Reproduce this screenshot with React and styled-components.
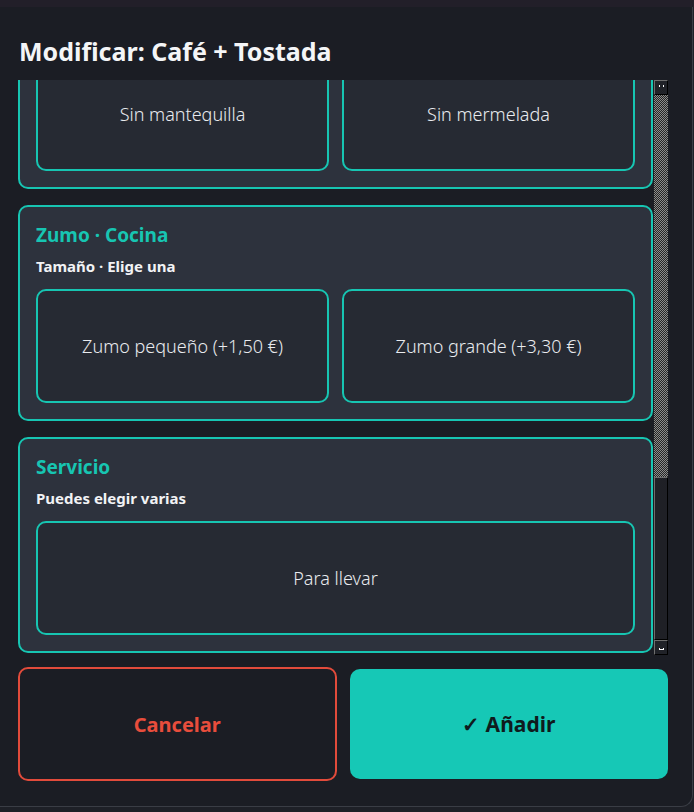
import React, { useLayoutEffect, useRef } from "react";
import styled, { createGlobalStyle } from "styled-components";

const TEAL = "#17c5b2";

const GlobalStyle = createGlobalStyle`
  * { box-sizing: border-box; }
  body {
    margin: 0;
    overflow: hidden;
    background: #1d1f26;
    font-family: "Noto Sans", "Open Sans", sans-serif;
  }
`;

const Overlay = styled.div`
  height: 100vh;
  padding-top: 7px;
  background: linear-gradient(#221f29 0 7px, #1e2027 7px);
  overflow: hidden;
`;

const Modal = styled.div`
  display: flex;
  flex-direction: column;
  height: 800px;
  width: 705px;
  margin-left: -12px;
  padding: 0 24px 0 29px;
  background: #1b1d24;
  border: 1px solid #3a3d45;
  border-top: 0;
  border-radius: 0 0 12px 12px;
`;

const Header = styled.div`
  padding: 28px 0 13px 1px;
`;

const Title = styled.h2`
  margin: 0;
  color: #f4f5f7;
  font-size: 25px;
  line-height: 32px;
  font-weight: 700;
`;

const Body = styled.div`
  flex: 1;
  min-height: 0;
  display: flex;
`;

const Scroll = styled.div`
  flex: 1;
  min-width: 0;
  overflow-y: auto;
  scrollbar-width: none;
  display: flex;
  flex-direction: column;
  gap: 16px;
  padding-bottom: 2px;
`;

/* classic scrollbar, drawn by hand: arrow, track, thumb (at the bottom), arrow */
const ScrollBar = styled.div`
  width: 14px;
  display: flex;
  flex-direction: column;
  background: #1b1d24;
`;

const ScrollArrow = styled.div`
  height: 15px;
  flex-shrink: 0;
  display: flex;
  align-items: ${(p) => (p.down ? "flex-end" : "flex-start")};
  justify-content: center;
  padding: 4px 0;
  background: #202228;
  border: 1px solid;
  border-color: #6e6e6e #000 #000 #6e6e6e;
`;

const ArrowDots = styled.div`
  width: 5px;
  height: 2px;
  border-left: 1px solid #fff;
  border-right: 1px solid #fff;
  border-bottom: ${(p) => (p.down ? "1px solid #fff" : "0")};
`;

const ScrollTrack = styled.div`
  flex: 1;
  background-color: #2a2a2a;
  background-image: repeating-conic-gradient(#8c8c8c 0 25%, #262626 0 50%);
  background-size: 2px 2px;
`;

const ScrollThumb = styled.div`
  height: 163px;
  flex-shrink: 0;
  background: #1f2026;
  border: 1px solid;
  border-color: #6e6e6e #000 #000 #6e6e6e;
`;

const Card = styled.section`
  flex-shrink: 0;
  margin-right: 1px;
  padding: 16px;
  background: #2d323d;
  border: 2px solid ${TEAL};
  border-radius: 10px;
`;

const CardTitle = styled.h3`
  margin: 0 0 9px;
  color: ${TEAL};
  font-size: 19px;
  line-height: 24px;
  font-weight: 700;
`;

const CardHint = styled.div`
  margin-bottom: 12px;
  color: #f2f3f5;
  font-size: 15px;
  line-height: 21px;
  font-weight: 700;
`;

const Options = styled.div`
  display: grid;
  grid-template-columns: ${(p) => (p.single ? "1fr" : "1fr 1fr")};
  gap: 13px;
`;

const Option = styled.button`
  height: 114px;
  background: #262a33;
  border: 2px solid ${TEAL};
  border-radius: 10px;
  color: #e9ebef;
  font-family: inherit;
  font-size: 18px;
  font-weight: 300;
  cursor: pointer;
`;

const Footer = styled.div`
  display: grid;
  grid-template-columns: 1fr 1fr;
  align-items: center;
  gap: 13px;
  padding: 12px 0 25px;
`;

const CancelButton = styled.button`
  height: 114px;
  background: transparent;
  border: 2px solid #e24b3b;
  border-radius: 10px;
  color: #e84d3c;
  font-family: inherit;
  font-size: 20px;
  font-weight: 700;
`;

const AddButton = styled.button`
  height: 110px;
  background: #16c8b6;
  border: 0;
  border-radius: 10px;
  color: #0f1b1d;
  font-family: inherit;
  font-size: 21px;
  font-weight: 700;
`;

const groups = [
  { title: "Café · Barra", hint: "Tipo · Elige una", options: ["Solo", "Cortado", "Con leche", "Americano"] },
  { title: "Café · Barra", hint: "Leche · Elige una", options: ["Entera", "Desnatada", "Sin lactosa", "Avena (+0,30 €)"] },
  { title: "Café · Barra", hint: "Azúcar · Elige una", options: ["Con azúcar", "Sacarina"] },
  { title: "Tostada · Cocina", hint: "Pan · Elige una", options: ["Pan blanco", "Pan integral (+0,40 €)"] },
  { title: "Tostada · Cocina", hint: "Quitar · Puedes elegir varias", options: ["Sin tomate", "Sin aceite", "Sin mantequilla", "Sin mermelada"] },
  { title: "Zumo · Cocina", hint: "Tamaño · Elige una", options: ["Zumo pequeño (+1,50 €)", "Zumo grande (+3,30 €)"] },
  { title: "Servicio", hint: "Puedes elegir varias", options: ["Para llevar"] },
];

export default function App() {
  const scrollRef = useRef(null);

  useLayoutEffect(() => {
    const el = scrollRef.current;
    if (el) el.scrollTop = el.scrollHeight;
  }, []);

  return (
    <Overlay>
      <GlobalStyle />
      <Modal>
        <Header>
          <Title>Modificar: Café + Tostada</Title>
        </Header>
        <Body>
          <Scroll ref={scrollRef}>
            {groups.map((g, i) => (
              <Card key={i}>
                <CardTitle>{g.title}</CardTitle>
                <CardHint>{g.hint}</CardHint>
                <Options single={g.options.length === 1}>
                  {g.options.map((o) => (
                    <Option key={o}>{o}</Option>
                  ))}
                </Options>
              </Card>
            ))}
          </Scroll>
          <ScrollBar>
            <ScrollArrow>
              <ArrowDots />
            </ScrollArrow>
            <ScrollTrack />
            <ScrollThumb />
            <ScrollArrow down>
              <ArrowDots down />
            </ScrollArrow>
          </ScrollBar>
        </Body>
        <Footer>
          <CancelButton>Cancelar</CancelButton>
          <AddButton>✓ Añadir</AddButton>
        </Footer>
      </Modal>
    </Overlay>
  );
}
